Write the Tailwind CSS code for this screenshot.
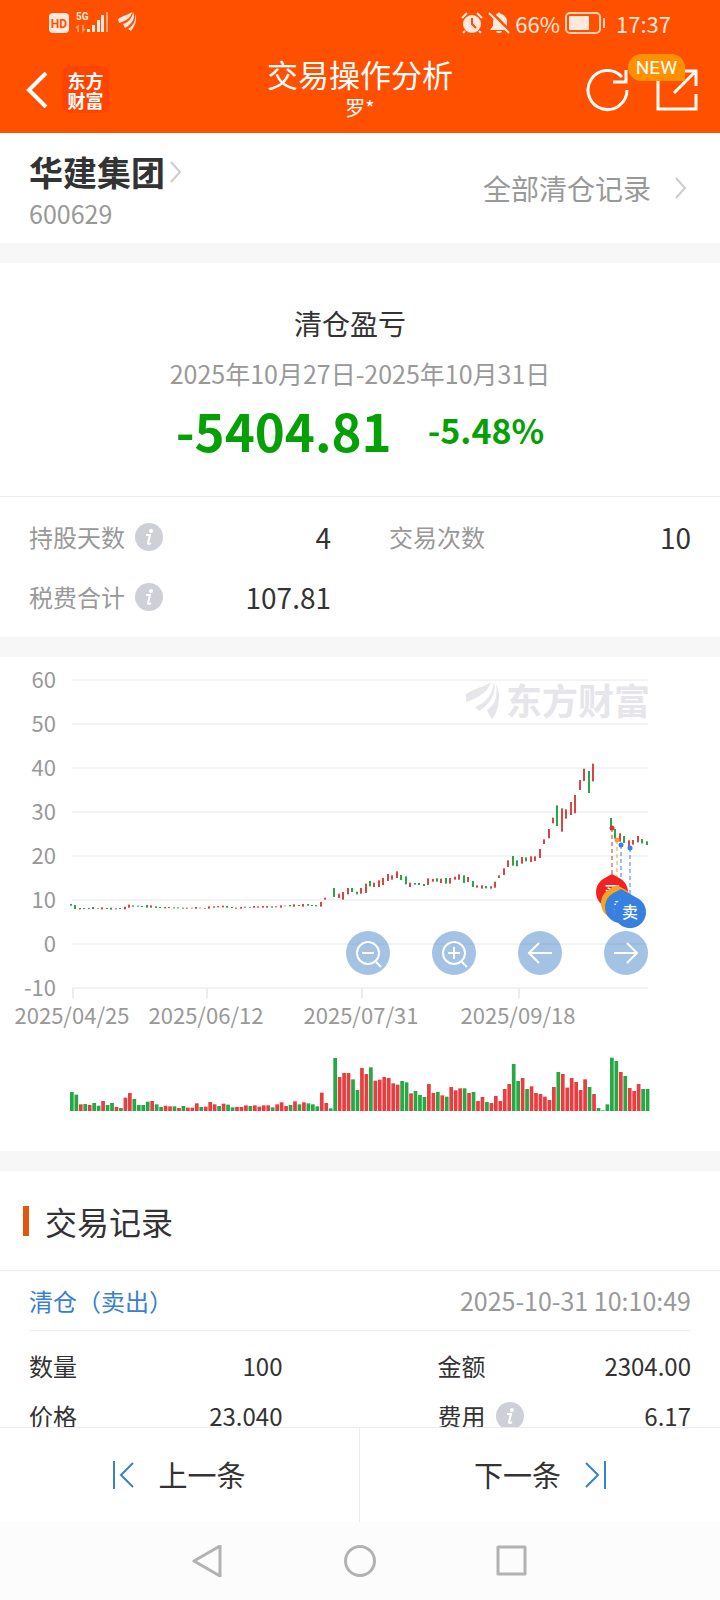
<!DOCTYPE html>
<html lang="zh-CN">
<head>
  <meta charset="UTF-8">
  <meta name="viewport" content="width=device-width, initial-scale=1.0">
  <title>交易操作分析</title>
  <script src="https://cdn.jsdelivr.net/npm/@tailwindcss/browser@4"></script>
</head>
<body class="flex h-screen flex-col overflow-hidden bg-white font-['Noto_Sans_CJK_SC','Noto_Sans',sans-serif] text-[#333]">
  <header class="shrink-0 bg-[#ff5000] text-white">
    <!-- status bar -->
    <div class="flex h-[46px] items-center justify-between px-[49px] text-[22px] leading-6 text-[#ffe9de]">
      <svg class="h-6 w-24" viewBox="0 0 96 24" fill="#ffe9de">
        <rect x="0" y="2" width="20" height="20" rx="4"/>
        <text x="10" y="17" text-anchor="middle" font-size="12" font-weight="700" fill="#ff5000" font-family="Roboto">HD</text>
        <text x="27" y="9" font-size="10" font-weight="700" font-family="Roboto">5G</text>
        <path d="M29 21v-6l-2 2M34 14v6l2-2" stroke="#ffa67d" stroke-width="1.5" fill="none"/>
        <path d="M38 18h3v3h-3zM43 14h3v7h-3zM48 9h3v12h-3zM52 4h3v17h-3z"/>
        <path d="M57 1h2v20h-2z" fill="#ffa67d"/>
        <path d="M69 8C75 4 79 4 83 1 82 7 77 10 70 12ZM74 13C80 11 83 7 84 1 87 7 83 13 76 17ZM79 18C85 14 87 9 86 3 89 9 85 16 82 20Z"/>
      </svg>
      <div class="flex items-center gap-[5px]">
        <svg class="h-6 w-[22px]" viewBox="0 0 22 24" fill="#ffe9de">
          <circle cx="11" cy="13" r="9"/>
          <path d="M1 7l5-5M21 7l-5-5M4 20l-2 2M18 20l2 2" stroke="#ffe9de" stroke-width="2"/>
          <path d="M11 7v6l4 4" stroke="#ff5000" stroke-width="2" fill="none"/>
        </svg>
        <svg class="h-6 w-[22px]" viewBox="0 0 22 24" fill="#ffe9de">
          <path d="M11 1l2 2c4 1 6 4 6 8v5l2 3H2l3-4v-4c0-4 2-7 4-8ZM8 20h6c-1 3-5 3-6 0Z"/>
          <path d="M3 1l19 19" stroke="#ff5000" stroke-width="3"/>
          <path d="M1 2l20 20" stroke="#ffe9de" stroke-width="2"/>
        </svg>
        <span>66%</span>
        <svg class="h-6 w-[42px]" viewBox="0 0 42 24">
          <rect x="1" y="2" width="34" height="20" rx="4" fill="none" stroke="#ffd0b8" stroke-width="2"/>
          <rect x="4" y="5" width="20" height="14" rx="1" fill="#ffe9de"/>
          <path d="M39 7v10" stroke="#ffd0b8" stroke-width="2"/>
        </svg>
        <span class="pl-1">17:37</span>
      </div>
    </div>
    <!-- title bar -->
    <div class="grid h-[87px] grid-cols-[1fr_auto_1fr] items-center px-[22px]">
      <div class="flex items-center gap-[14px] pl-1">
        <button type="button" aria-label="返回">
          <svg class="h-9 w-[22px]" viewBox="0 0 22 36" fill="none" stroke="#fff" stroke-width="4"><path d="M20 1L3 18l17 17"/></svg>
        </button>
        <div class="flex size-[47px] flex-col items-center justify-center rounded-lg bg-[#ff4400] text-[18px] leading-[20px] font-bold"><span>东方</span><span>财富</span></div>
      </div>
      <div class="text-center">
        <h1 class="text-[31px] leading-9">交易操作分析</h1>
        <p class="text-[20px] leading-8">罗*</p>
      </div>
      <div class="relative flex items-center justify-end gap-[27px]">
        <button type="button" aria-label="刷新">
          <svg class="size-[44px]" viewBox="0 0 44 44" fill="none" stroke="#fff" stroke-width="3"><path d="M42 22A19.500 19.500 0 1 1 37 9M41 2v12H28"/></svg>
        </button>
        <button type="button" aria-label="分享">
          <svg class="size-[42px]" viewBox="0 0 42 42" fill="none" stroke="#fff" stroke-width="3"><path d="M15 3H2v37h38V25M28 2h12v15M39 3L18 24"/></svg>
        </button>
        <span class="absolute -top-[14px] right-[13px] rounded-full rounded-br-none bg-[#ff9000] px-2 font-[Roboto,sans-serif] text-[19px] leading-[27px]">NEW</span>
      </div>
    </div>
  </header>

  <main class="min-h-0 flex-1 overflow-hidden">
    <section class="flex h-[110px] items-center justify-between px-[29px]">
      <div class="pt-[3px]">
        <h2 class="flex items-center gap-[5px] text-[34px] leading-[46px] font-bold">华建集团
          <svg class="h-[22px] w-3" viewBox="0 0 12 22" fill="none" stroke="#ccc" stroke-width="2"><path d="M1 1l9 10L1 21"/></svg>
        </h2>
        <p class="text-[25px] leading-9 text-[#999]">600629</p>
      </div>
      <a href="#" class="flex items-center gap-6 pr-1 text-[28px] leading-10 text-[#999]">全部清仓记录
        <svg class="h-[22px] w-3" viewBox="0 0 12 22" fill="none" stroke="#ccc" stroke-width="2"><path d="M1 1l9 10L1 21"/></svg>
      </a>
    </section>

    <section class="border-t-20 border-[#f7f7f7]">
      <div class="border-b border-[#ececec] pt-10 pb-[38px] text-center">
        <h3 class="pr-5 text-[28px] leading-10">清仓盈亏</h3>
        <p class="mt-3 text-[25px] leading-9 text-[#999]">2025年10月27日-2025年10月31日</p>
        <p class="mt-[11px] flex items-center justify-center gap-9 leading-14 font-bold text-[#05a005]">
          <span class="text-[51px]">-5404.81</span><span class="text-[34px]">-5.48%</span>
        </p>
      </div>
      <dl class="grid grid-cols-2 gap-x-[58px] px-[29px] py-[10px]">
        <div class="flex h-[60px] items-center gap-[10px]">
          <dt class="text-[24px] text-[#999]">持股天数</dt>
          <svg class="size-7" viewBox="0 0 28 28"><circle cx="14" cy="14" r="14" fill="#cdd0d6"/><circle cx="16" cy="8" r="2" fill="#fff"/><path d="M11 12h4l-2 8q0 2 3 0" fill="none" stroke="#fff" stroke-width="2"/></svg>
          <dd class="ml-auto text-[28px]">4</dd>
        </div>
        <div class="flex h-[60px] items-center justify-between">
          <dt class="text-[24px] text-[#999]">交易次数</dt>
          <dd class="text-[28px]">10</dd>
        </div>
        <div class="flex h-[60px] items-center gap-[10px]">
          <dt class="text-[24px] text-[#999]">税费合计</dt>
          <svg class="size-7" viewBox="0 0 28 28"><circle cx="14" cy="14" r="14" fill="#cdd0d6"/><circle cx="16" cy="8" r="2" fill="#fff"/><path d="M11 12h4l-2 8q0 2 3 0" fill="none" stroke="#fff" stroke-width="2"/></svg>
          <dd class="ml-auto text-[28px]">107.81</dd>
        </div>
      </dl>
    </section>

    <section class="relative border-t-20 border-[#f7f7f7]">
      <svg id="chart" class="block w-full text-[22px]" viewBox="0 17 720 494" fill="#999">
        <g id="grid"></g>
        <g fill="#e5e5ea">
          <path d="M466 54C477 47 485 47 491 42 488 52 478 58 466 62ZM475 67C486 63 493 54 494 42 497 53 490 64 479 71ZM487 70C495 65 498 56 496 44 502 54 498 73 492 79 490 76 488 73 487 70Z"/>
          <text x="506" y="75" font-size="36" font-weight="700">东方财富</text>
        </g>
        <g id="candles"></g>
        <g id="volumes"></g>
        <g id="marks"></g>
      </svg>
      <div class="absolute top-[274px] right-[10%] left-[48%] flex justify-between">
        <button type="button" aria-label="缩小" class="size-11 rounded-full bg-[#4a86c9]/50">
          <svg viewBox="0 0 44 44" fill="none" stroke="#fff" stroke-width="2"><circle cx="22" cy="22" r="11"/><path d="M16 22h12M30 31l5 5"/></svg>
        </button>
        <button type="button" aria-label="放大" class="size-11 rounded-full bg-[#4a86c9]/50">
          <svg viewBox="0 0 44 44" fill="none" stroke="#fff" stroke-width="2"><circle cx="22" cy="22" r="11"/><path d="M16 22h12M22 16v12M30 31l5 5"/></svg>
        </button>
        <button type="button" aria-label="左移" class="size-11 rounded-full bg-[#4a86c9]/50">
          <svg viewBox="0 0 44 44" fill="none" stroke="#fff" stroke-width="2"><path d="M34 22H11M21 12L11 22l10 10"/></svg>
        </button>
        <button type="button" aria-label="右移" class="size-11 rounded-full bg-[#4a86c9]/50">
          <svg viewBox="0 0 44 44" fill="none" stroke="#fff" stroke-width="2"><path d="M10 22h23M23 12l10 10-10 10"/></svg>
        </button>
      </div>
    </section>

    <section class="border-t-20 border-[#f7f7f7]">
      <h3 class="flex h-[100px] items-center gap-4 border-b border-[#ececec] pl-[23px] text-[32px]">
        <span class="h-[30px] w-[6px] bg-[#e2570e]"></span>交易记录
      </h3>
      <div class="px-[29px]">
        <div class="flex h-[60px] items-center justify-between border-b border-[#ececec]">
          <span class="text-[24px] text-[#3880d0]">清仓（卖出）</span>
          <time class="text-[25px] text-[#999]">2025-10-31 10:10:49</time>
        </div>
        <dl class="grid grid-cols-2 gap-x-[155px] pt-[10px] text-[24px]">
          <div class="flex h-[50px] items-center justify-between"><dt>数量</dt><dd>100</dd></div>
          <div class="flex h-[50px] items-center justify-between"><dt>金额</dt><dd>2304.00</dd></div>
          <div class="flex h-[50px] items-center justify-between"><dt>价格</dt><dd>23.040</dd></div>
          <div class="flex h-[50px] items-center gap-[10px]">
            <dt>费用</dt>
            <svg class="size-7" viewBox="0 0 28 28"><circle cx="14" cy="14" r="14" fill="#cdd0d6"/><circle cx="16" cy="8" r="2" fill="#fff"/><path d="M11 12h4l-2 8q0 2 3 0" fill="none" stroke="#fff" stroke-width="2"/></svg>
            <dd class="ml-auto">6.17</dd>
          </div>
        </dl>
      </div>
    </section>
  </main>

  <footer class="shrink-0">
    <div class="grid h-[95px] grid-cols-2 border-t border-[#ececec] text-[29px]">
      <button type="button" class="flex items-center justify-center gap-6 border-r border-[#ececec]">
        <svg class="h-7 w-[21px]" viewBox="0 0 21 28" fill="none" stroke="#3880d0" stroke-width="2"><path d="M1 0v28M20 2L8 14l12 12"/></svg>
        上一条
      </button>
      <button type="button" class="flex items-center justify-center gap-6">
        下一条
        <svg class="h-7 w-[21px]" viewBox="0 0 21 28" fill="none" stroke="#3880d0" stroke-width="2"><path d="M20 0v28M1 2l12 12L1 26"/></svg>
      </button>
    </div>
    <nav class="flex h-[78px] items-center justify-center gap-[120px] bg-[#fcfcfc]">
      <button type="button" aria-label="系统返回"><svg class="size-8" viewBox="0 0 32 32" fill="none" stroke="#b2b2b2" stroke-width="3" stroke-linejoin="round"><path d="M28 1v30L2 16Z"/></svg></button>
      <button type="button" aria-label="主屏幕"><svg class="size-8" viewBox="0 0 32 32" fill="none" stroke="#b2b2b2" stroke-width="3"><circle cx="16" cy="16" r="14.500"/></svg></button>
      <button type="button" aria-label="最近任务"><svg class="size-8" viewBox="0 0 32 32" fill="none" stroke="#b2b2b2" stroke-width="3" stroke-linejoin="round"><path d="M2 2h27v27H2Z"/></svg></button>
    </nav>
  </footer>

  <script>
    const RED = '#d94545';
    const GREEN = '#28a745';
    const STEP = 4.463;

    // one entry per trading day: colour, top-bottom (third pixels), "-" = suspended
    const candles = `g792-797 g795-807 r804-808 g804-807 r804-807 g801-807 g804-806 r802-808 r804-807 g803-809
      r805-808 g804-807 r800-808 r794-803 g796-800 g797-800 g798-801 g795-803 r796-803 g799-804
      g801-804 r801-805 r801-804 g802-805 g802-805 g803-806 r803-806 r803-805 r801-806 g803-805
      r804-806 r799-806 r799-803 r798-802 r797-802 g798-803 g801-804 r803-806 r801-806 r800-803
      g801-803 r798-803 r799-803 r798-803 r798-803 g799-803 r799-802 r796-803 r797-799 g795-799
      r793-800 g795-798 r792-800 g792-797 g795-798 g795-799 r786-800 r773-779 - g744-771
      r761-774 r756-779 r744-763 g744-756 g755-763 r744-761 r731-759 g723-739 r728-741 r721-741
      r714-735 r702-723 r706-719 r694-714 g705-720 g709-733 r728-741 g729-734 g729-735 g732-738
      r715-735 r717-725 g715-725 r716-729 g714-731 r714-731 r710-719 r703-719 g706-729 r711-726
      g723-741 r736-743 r736-746 g738-745 r739-746 r725-743 r706-714 r685-705 r661-681 g648-677
      g661-679 r651-671 g652-664 r649-666 r649-663 r627-654 r598-612 r567-595 r533-550 g496-558
      r505-575 r508-536 r486-525 r465-520 r420-450 r386-423 g393-459 r371-424 - -
      - g534-565 g567-596 r580-605 g588-609 r601-620 r600-614 r588-607 g597-610 g604-615`.split(/\s+/);

    const volumes = `g57 g49 r20 g21 r18 g24 g16 r30 g18 g24 r12 g9 r40 r54 g36 g18 g18 g28 r30 g20
      g12 r16 r14 g14 r9 g15 r10 r10 r23 g12 r13 r27 r20 g15 r22 g19 g11 r12 r12 r17
      g15 r17 r13 r17 r17 g11 r20 r26 r15 g18 r29 g20 r26 g23 g20 g14 r55 r24 g8 g159
      r102 r114 r114 g95 g63 r129 r111 g131 r91 r94 r102 r99 r83 r79 g90 g86 r53 g60 g48 g42
      r81 r54 g57 r47 g43 r72 r62 r68 g68 r54 g57 r30 r42 g27 r24 r45 r30 r66 r81 g141
      g90 r99 g66 r74 r54 r51 r43 r33 r72 g117 r111 r70 r99 r87 r63 r95 g72 r51 g9 g2
      g20 g160 g150 r117 g105 r69 r60 r81 g66 g66`.split(/\s+/);

    const dates = [['2025/04/25', 72], ['2025/06/12', 206], ['2025/07/31', 361], ['2025/09/18', 518]];

    let grid = '';
    for (let i = 0; i < 8; i++) {
      const y = 40 + i * 44;
      grid += `<path d="M72 ${y}H648" stroke="#f3f3f3" stroke-width="2"/>`;
      grid += `<text x="56" y="${y + 8}" text-anchor="end">${60 - i * 10}</text>`;
    }
    dates.forEach(([label, x]) => {
      grid += `<path d="M${x + 1} 348v10" stroke="#ececec" stroke-width="2"/>`;
      grid += `<text x="${x}" y="384" text-anchor="middle">${label}</text>`;
    });
    document.getElementById('grid').innerHTML = grid;

    document.getElementById('candles').innerHTML = candles.map((c, i) => {
      if (c === '-') return '';
      const [top, bottom] = c.slice(1).split('-').map(Number);
      const x = Math.round(70 + i * STEP);
      return `<rect x="${x}" y="${top / 3}" width="2" height="${(bottom - top) / 3}" fill="${c[0] === 'r' ? RED : GREEN}"/>`;
    }).join('');

    document.getElementById('volumes').innerHTML = volumes.map((v, i) => {
      const h = v.slice(1) / 3;
      return `<rect x="${70 + i * STEP}" y="${471 - h}" width="3.7" height="${h}" fill="${v[0] === 'r' ? '#e83e42' : GREEN}"/>`;
    }).join('');

    // trade pins: x, dot y, pin centre y, dot colour, pin colour, label
    const marks = [
      [612, 188, 252, '#d93030', '#f22222', '买'],
      [617, 200, 263, '#f0a030', '#f7a325', ''],
      [621, 205, 267, '#3880e0', '#3880e0', '卖'],
      [630, 208, 272, '#3880e0', '#3880e0', '卖'],
    ];
    const pins = marks.map(([x, y, cy, dot, fill, label]) => `
      <path transform="translate(${x} ${cy})" d="M0-18L9-13A16 16 0 1 1-9-13Z" fill="${fill}"/>
      <text x="${x}" y="${cy + 6}" text-anchor="middle" font-size="16" font-weight="500" fill="#fff">${label}</text>`);
    const stems = marks.map(([x, y, cy, dot]) => `
      <path d="M${x} ${y}V${cy - 16}" stroke="${dot}" stroke-dasharray="4 3"/>
      <circle cx="${x}" cy="${y}" r="2.500" fill="${dot}"/>`);
    document.getElementById('marks').innerHTML = stems.join('') + pins.join('');
  </script>
</body>
</html>
